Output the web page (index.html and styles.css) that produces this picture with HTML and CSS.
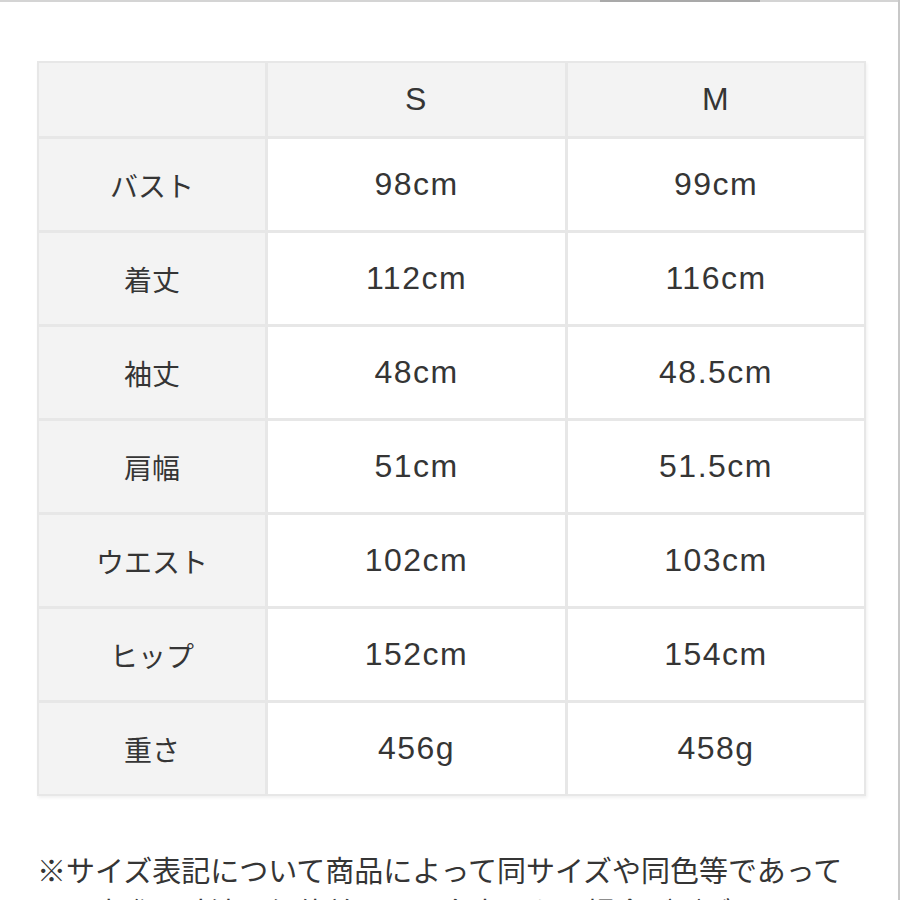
FILE: index.html
```html
<!DOCTYPE html>
<html lang="ja">
<head>
<meta charset="utf-8">
<link rel="stylesheet" href="styles.css">
</head>
<body>
<div class="page">
  <div class="topline"><span class="thumb"></span></div>
  <div class="content">
    <div class="size-table">
      <div class="cell head"></div>
      <div class="cell head">S</div>
      <div class="cell head">M</div>

      <div class="cell label">バスト</div>
      <div class="cell">98cm</div>
      <div class="cell">99cm</div>

      <div class="cell label">着丈</div>
      <div class="cell">112cm</div>
      <div class="cell">116cm</div>

      <div class="cell label">袖丈</div>
      <div class="cell">48cm</div>
      <div class="cell">48.5cm</div>

      <div class="cell label">肩幅</div>
      <div class="cell">51cm</div>
      <div class="cell">51.5cm</div>

      <div class="cell label">ウエスト</div>
      <div class="cell">102cm</div>
      <div class="cell">103cm</div>

      <div class="cell label">ヒップ</div>
      <div class="cell">152cm</div>
      <div class="cell">154cm</div>

      <div class="cell label">重さ</div>
      <div class="cell">456g</div>
      <div class="cell">458g</div>
    </div>
    <p class="note">※サイズ表記について商品によって同サイズや同色等であって<br>も、実際の寸法は個体差により多少異なる場合がございます。</p>
  </div>
</div>
</body>
</html>
```

FILE: styles.css
```css
html, body {
  margin: 0;
  padding: 0;
  background: #ffffff;
}

body {
  font-family: "Liberation Sans", "Noto Sans CJK JP", sans-serif;
  color: #353535;
  overflow: hidden;
}

.page {
  width: 900px;
  height: 900px;
  box-sizing: border-box;
  border-right: 2px solid #c8c8c8;
  overflow: hidden;
}

.topline {
  height: 2px;
  background: #d4d4d4;
  display: flex;
}

.thumb {
  margin-left: 600px;
  width: 160px;
  height: 2px;
  background: #a9a9a9;
}

.content {
  padding: 59px 0 0 37px;
}

.size-table {
  width: 829px;
  box-sizing: border-box;
  display: grid;
  grid-template-columns: 226px 297px 296px;
  grid-template-rows: 73px repeat(7, 91px);
  gap: 3px;
  padding: 2px;
  background: #e7e7e7;
  box-shadow: 1px 2px 3px rgba(0, 0, 0, 0.06);
}

.cell {
  background: #ffffff;
  display: flex;
  align-items: center;
  justify-content: center;
  font-size: 32px;
  letter-spacing: 1.5px;
  color: #353535;
}

.cell.head,
.cell.label {
  background: #f3f3f3;
}

.cell.label {
  font-family: "Noto Sans CJK JP", sans-serif;
  font-size: 28px;
  letter-spacing: 0;
}

.note {
  margin: 52px 0 0 0;
  font-family: "Noto Sans CJK JP", sans-serif;
  font-size: 29px;
  line-height: 42px;
  color: #353535;
  white-space: nowrap;
  letter-spacing: 0;
}
```
